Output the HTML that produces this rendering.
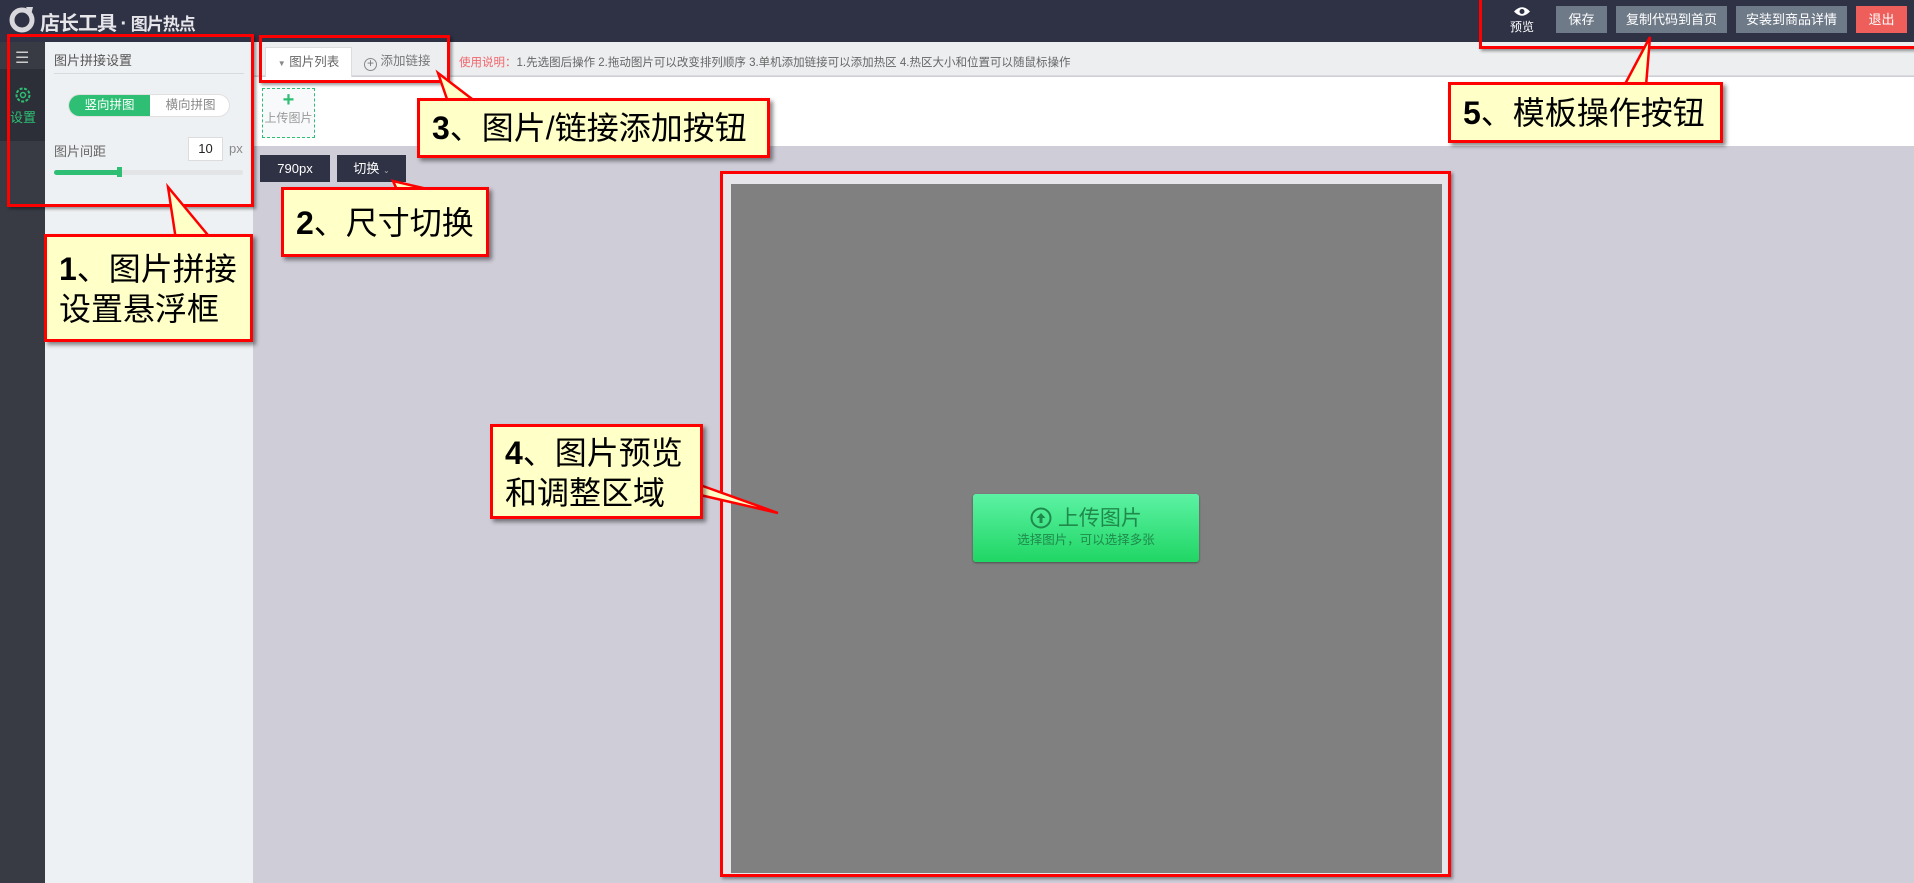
<!DOCTYPE html>
<html><head><meta charset="utf-8"><style>
*{margin:0;padding:0;box-sizing:border-box}
body{width:1914px;height:883px;overflow:hidden;position:relative;background:#cfcdd8;font-family:"Liberation Sans","Noto Sans CJK SC",sans-serif;font-size:12px;color:#555}
.a{position:absolute}
.top{left:0;top:0;width:1914px;height:42px;background:#2f3245}
.btn{position:absolute;top:6px;height:27px;line-height:27px;background:#6f7a88;color:#fff;text-align:center;font-size:13px}
.rb{position:absolute;border:3px solid #f00;box-shadow:2px 2px 3px rgba(0,0,0,.4)}
.co{position:absolute;background:#ffffc8;border:3px solid #f00;box-shadow:3px 3px 4px rgba(0,0,0,.45);color:#000;font-size:32px;line-height:40px;padding-left:12px}
.co b{font-family:"Liberation Sans",sans-serif}
</style></head><body>
<div class="a top"></div>
<svg class="a" style="left:9px;top:5px" width="28" height="28" viewBox="0 0 28 28"><circle cx="13" cy="15" r="10" fill="none" stroke="#d8d8dc" stroke-width="5"/><path d="M17 2 L24 2 L22 10 Z" fill="#d8d8dc"/></svg>
<div class="a" style="left:40px;top:7px;color:#e6e6ea;font-size:20px;font-weight:bold;letter-spacing:-1px">店长工具 · <span style="font-size:17px">图片热点</span></div>
<div class="a" style="left:1508px;top:6px;width:28px;text-align:center;color:#fff;font-size:12px;line-height:14px"><svg width="18" height="11" viewBox="0 0 18 11"><path d="M1 5.5 Q9 -3 17 5.5 Q9 14 1 5.5Z" fill="#fff"/><circle cx="9" cy="5.5" r="2.5" fill="#2f3245"/></svg><br>预览</div>
<div class="btn" style="left:1556px;width:51px">保存</div>
<div class="btn" style="left:1616px;width:111px">复制代码到首页</div>
<div class="btn" style="left:1736px;width:111px">安装到商品详情</div>
<div class="btn" style="left:1856px;width:51px;background:#ee5f5b">退出</div>

<div class="a" style="left:0;top:42px;width:45px;height:841px;background:#383b44"></div>
<div class="a" style="left:0;top:69px;width:45px;height:72px;background:#2c2f37"></div>
<div class="a" style="left:15px;top:48px;color:#ccc;font-size:16px">☰</div>
<svg class="a" style="left:14px;top:86px" width="18" height="18" viewBox="0 0 18 18"><circle cx="9" cy="9" r="6.5" fill="none" stroke="#2ebf74" stroke-width="2" stroke-dasharray="3 1.5"/><circle cx="9" cy="9" r="2.5" fill="none" stroke="#2ebf74" stroke-width="1.5"/></svg>
<div class="a" style="left:10px;top:107px;color:#2ebf74;font-size:13px">设置</div>
<div class="a" style="left:39px;top:101px;width:0;height:0;border:6px solid transparent;border-right-color:#eef1f3"></div>

<div class="a" style="left:45px;top:42px;width:208px;height:841px;background:#eef1f3"></div>
<div class="a" style="left:54px;top:50px;font-size:13px;color:#555">图片拼接设置</div>
<div class="a" style="left:54px;top:73px;width:190px;height:1px;background:#d8dbde"></div>
<div class="a" style="left:68px;top:94px;width:162px;height:23px;border-radius:12px;background:#fff;border:1px solid #e0e0e0;overflow:hidden"><div style="position:absolute;left:0;top:0;width:81px;height:23px;background:#2ebf74;color:#fff;text-align:center;line-height:21px;font-size:12.5px">竖向拼图</div><div style="position:absolute;left:81px;top:0;width:81px;text-align:center;line-height:21px;color:#888;font-size:12.5px">横向拼图</div></div>
<div class="a" style="left:54px;top:141px;font-size:13px;color:#666">图片间距</div>
<div class="a" style="left:188px;top:137px;width:35px;height:24px;background:#fff;border:1px solid #ddd;text-align:center;line-height:22px;color:#222;font-size:13px">10</div>
<div class="a" style="left:229px;top:141px;color:#888;font-size:13px">px</div>
<div class="a" style="left:54px;top:170px;width:189px;height:5px;background:#e2e4e6;border-radius:3px"></div>
<div class="a" style="left:54px;top:170px;width:66px;height:5px;background:#2ebf74;border-radius:3px"></div>
<div class="a" style="left:117px;top:167px;width:5px;height:10px;background:#2ebf74"></div>

<div class="a" style="left:253px;top:42px;width:1661px;height:34px;background:#eceef0;border-bottom:1px solid #dcdcdc"></div>
<div class="a" style="left:265px;top:47px;width:87px;height:30px;background:#fff;border:1px solid #ddd;border-bottom:none;line-height:28px;text-align:center;color:#666;font-size:12.5px"><span style="font-size:8px;color:#888">▼</span> 图片列表</div>
<div class="a" style="left:364px;top:47px;line-height:28px;color:#777;font-size:12.5px"><span style="display:inline-block;width:13px;height:13px;border:1.5px solid #888;border-radius:50%;text-align:center;line-height:9px;font-size:12px;vertical-align:-2px">+</span> 添加链接</div>
<div class="a" style="left:459px;top:54px;color:#666;font-size:11.5px"><span style="color:#f0656a">使用说明：</span>1.先选图后操作 2.拖动图片可以改变排列顺序 3.单机添加链接可以添加热区 4.热区大小和位置可以随鼠标操作</div>
<div class="a" style="left:253px;top:77px;width:1661px;height:69px;background:#fff"></div>
<div class="a" style="left:262px;top:88px;width:53px;height:50px;border:1px dashed #2ebf74;background:#f7f9fb;text-align:center"><div style="color:#2ebf74;font-size:20px;font-weight:bold;line-height:22px">+</div><div style="color:#999;font-size:12px;line-height:14px">上传图片</div></div>

<div class="a" style="left:260px;top:155px;width:70px;height:27px;background:#2f3245;color:#fff;text-align:center;line-height:27px;font-size:13px">790px</div>
<div class="a" style="left:337px;top:155px;width:69px;height:27px;background:#2f3245;color:#fff;text-align:center;line-height:27px;font-size:13px">切换 <span style="font-size:8px;color:#aaa">⌄</span></div>

<div class="a" style="left:723px;top:174px;width:725px;height:702px;background:#e6e6ea"></div>
<div class="a" style="left:731px;top:184px;width:711px;height:689px;background:#808080"></div>
<div class="a" style="left:973px;top:494px;width:226px;height:68px;border-radius:3px;background:linear-gradient(#5cf2a4,#20d664);box-shadow:0 1px 2px rgba(0,0,0,.4);text-align:center;color:#1f8a4c">
<div style="margin-top:12px;font-size:21px;line-height:26px"><svg width="22" height="22" viewBox="0 0 22 22" style="vertical-align:-4px"><circle cx="11" cy="11" r="9.5" fill="none" stroke="#1f8a4c" stroke-width="2"/><path d="M11 6 L15.5 11 H12.5 V16 H9.5 V11 H6.5Z" fill="#1f8a4c"/></svg> 上传图片</div>
<div style="font-size:12.5px;line-height:16px">选择图片，可以选择多张</div></div>

<div class="rb" style="left:720px;top:171px;width:731px;height:706px"></div>
<div class="rb" style="left:7px;top:34px;width:247px;height:173px"></div>
<div class="rb" style="left:259px;top:35px;width:191px;height:48px"></div>
<div class="rb" style="left:1479px;top:-5px;width:438px;height:54px"></div>

<svg class="a" style="left:0;top:0" width="1914" height="883">
<g fill="#ffffc8" stroke="#f00" stroke-width="2.5">
<polygon points="168,187 176,240 212,240"/>
<polygon points="438,73 448,102 476,102"/>
<polygon points="393,181 398,192 440,192"/>
<polygon points="700,485 778,513 700,495"/>
<polygon points="1650,37 1624,86 1646,86"/>
</g></svg>
<div class="co" style="left:44px;top:234px;width:209px;height:108px;padding-top:12px">
<b>1</b>、图片拼接<br>设置悬浮框</div>
<div class="co" style="left:281px;top:187px;width:208px;height:70px;padding-top:13px"><b>2</b>、尺寸切换</div>
<div class="co" style="left:417px;top:98px;width:353px;height:60px;padding-top:7px"><b>3</b>、图片/链接添加按钮</div>
<div class="co" style="left:490px;top:424px;width:213px;height:95px;padding-top:6px"><b>4</b>、图片预览<br>和调整区域</div>
<div class="co" style="left:1448px;top:82px;width:275px;height:61px;padding-top:8px"><b>5</b>、模板操作按钮</div>
</body></html>
